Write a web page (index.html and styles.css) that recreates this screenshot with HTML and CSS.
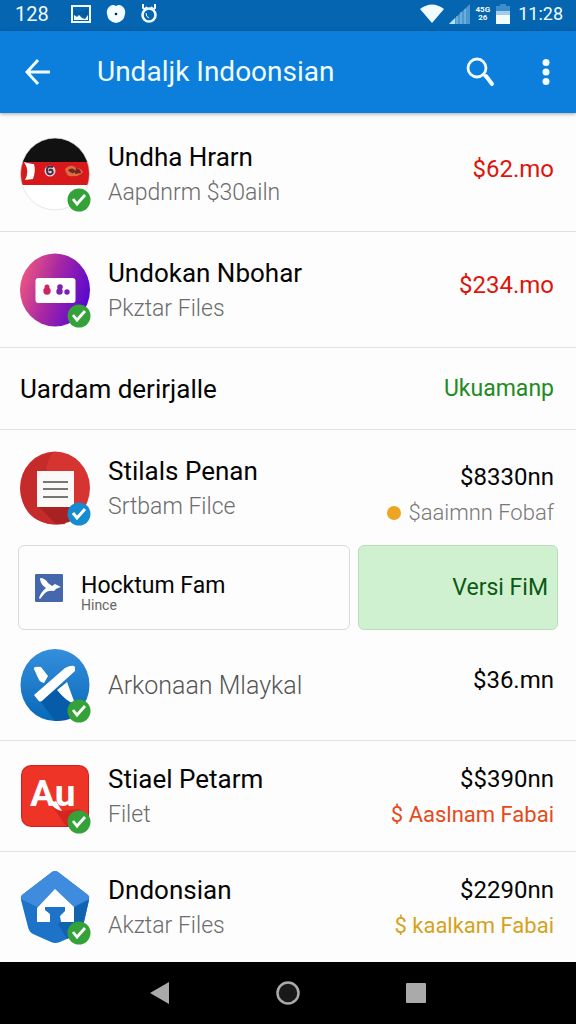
FILE: index.html
```html
<!DOCTYPE html>
<html lang="id">

<head>
    <meta charset="utf-8">
    <meta name="viewport" content="width=device-width, initial-scale=1">
    <title>Undaljk Indoonsian</title>
    <link rel="stylesheet" href="styles.css">
</head>

<body>
    <div class="status-bar">
        <span class="status-text">128</span>
        <svg class="status-image" width="20" height="18" viewBox="0 0 20 18">
            <rect x="1" y="1" width="18" height="16" fill="none" stroke="#f0fcff" stroke-width="2" />
            <path d="M3 4l5 3 4-1 5-2v5l-3 4-3-4-3 2-2-2-3 2z" fill="#07599b" />
            <path d="M3 10l3 2 2-2 3 3 3 1 3-4v5H3z" fill="#f0fcff" />
        </svg>
        <svg class="status-blob" width="20" height="20" viewBox="0 0 20 20">
            <path d="M4 2q3-2 6 0 3-2 6 0 4 3 3 8-1 8-9 9-8-1-9-9-1-5 3-8z" fill="#f0fcff" />
            <circle cx="10" cy="10" r="1.3" fill="#123" />
        </svg>
        <svg class="status-ring" width="18" height="20" viewBox="0 0 18 20" fill="none" stroke="#f0fcff">
            <circle cx="9" cy="11" r="6.5" stroke-width="2.6" />
            <path d="M3 0v4l3 2M15 0v4l-3 2M7 3l-3 3M11 3l3 3" stroke-width="2" />
            <path d="M6 9q0 4 3 5" stroke-width="1" />
        </svg>
        <div class="status-right">
            <svg width="24" height="20" viewBox="0 0 24 20">
                <path d="M0 5Q12-4 24 5L12 19z" fill="#f0fcff" />
            </svg>
            <svg width="21" height="20" viewBox="0 0 21 20">
                <path d="M0 20L21 0v20z" fill="#4b97d0" />
                <path d="M0 20l6-6v6z" fill="#b9e0f5" />
                <path d="M8 12v8M12 8v12M16 5v15" stroke="#8fc3e8" stroke-width="1" />
            </svg>
            <span class="status-net"><span>45G</span><span>26</span></span>
            <svg width="14" height="20" viewBox="0 0 14 20">
                <path d="M4 0h6v2h4v9H0V2h4z" fill="#3c8ecb" />
                <rect y="7" width="14" height="5" fill="#a5cbea" />
                <rect y="11" width="14" height="9" fill="#f0fcff" />
            </svg>
            <span class="status-text clock">11:28</span>
        </div>
    </div>

    <header class="app-bar">
        <button class="icon-button" aria-label="Back">
            <svg width="26" height="26" viewBox="0 0 26 26">
                <path d="M13 1L2 13l11 12M2 13h23" fill="none" stroke="#f0fcff" stroke-width="3" />
            </svg>
        </button>
        <h1 class="app-title">Undaljk Indoonsian</h1>
        <button class="icon-button" aria-label="Search">
            <svg width="30" height="30" viewBox="0 0 30 30" fill="none" stroke="#f0fcff">
                <circle cx="11" cy="11" r="9" stroke-width="2.8" />
                <path d="M17 17l4 4" stroke-width="3" />
                <path d="M20 19l6 8" stroke-width="4" stroke-linecap="round" />
            </svg>
        </button>
        <button class="icon-button menu-button" aria-label="More">
            <svg width="8" height="26" viewBox="0 0 8 26" fill="#f0fcff">
                <circle cx="4" cy="3.5" r="3.5" />
                <circle cx="4" cy="13" r="3.5" />
                <circle cx="4" cy="22.5" r="3.5" />
            </svg>
        </button>
    </header>

    <main class="list">
        <div class="row">
            <div class="avatar">
                <svg width="70" height="74" viewBox="0 0 70 74">
                    <clipPath id="flag"><ellipse cx="35" cy="37" rx="34.5" ry="36" /></clipPath>
                    <g clip-path="url(#flag)">
                        <rect width="70" height="74" fill="#fff" />
                        <rect width="70" height="26" fill="#111" />
                        <rect y="25" width="70" height="23" fill="#d8191c" />
                        <path d="M4 25q7 2 10 2 2 7-1 15l-8 1q5-9-1-18z" fill="#fff" />
                        <circle cx="30" cy="34" r="5.5" fill="#e9cfd7" />
                        <path d="M33 30q-6-2-6 3 0 5 4 4 3-1 1-4-2-1-3 1" fill="none" stroke="#423047" stroke-width="2" />
                        <path d="M45 32q6-6 11-1 5 0 7 4-4 5-10 4-6 2-8-7z" fill="#dc6c42" />
                        <path d="M48 33q5-4 8 2-5 3-8-2m8-2q5 1 5 5l-6 1" fill="#722621" />
                    </g>
                    <ellipse cx="35" cy="37" rx="34.5" ry="36" fill="none" stroke="#ddd" stroke-width=".7" />
                </svg>
                <svg class="badge" width="24" height="24" viewBox="0 0 24 24">
                    <circle cx="12" cy="12" r="11.5" fill="#35a239" />
                    <path d="M6 11l4 5 8-9" fill="none" stroke="#fff" stroke-width="2.8" />
                </svg>
            </div>
            <div class="info">
                <div class="name">Undha Hrarn</div>
                <div class="sub">Aapdnrm $30ailn</div>
            </div>
            <div class="amount single red">$62.mo</div>
        </div>

        <div class="row">
            <div class="avatar">
                <svg width="70" height="74" viewBox="0 0 70 74">
                    <linearGradient id="purple" x1="0" y1=".2" x2="1" y2=".55">
                        <stop offset="0" stop-color="#f35b7c" />
                        <stop offset=".5" stop-color="#a526a5" />
                        <stop offset="1" stop-color="#5908cf" />
                    </linearGradient>
                    <ellipse cx="35" cy="37" rx="35" ry="36.5" fill="url(#purple)" />
                    <rect x="15.5" y="25" width="40" height="25" rx="3" fill="#fff" />
                    <g fill="#ce2464">
                        <circle cx="27" cy="34" r="2.5" />
                        <circle cx="27" cy="38" r="3.7" />
                    </g>
                    <g fill="#7c23ae">
                        <circle cx="40" cy="34" r="2.8" />
                        <circle cx="39.5" cy="38.5" r="3.2" />
                        <circle cx="47" cy="39" r="2.7" />
                    </g>
                </svg>
                <svg class="badge" width="24" height="24" viewBox="0 0 24 24">
                    <circle cx="12" cy="12" r="11.5" fill="#35a239" />
                    <path d="M6 11l4 5 8-9" fill="none" stroke="#fff" stroke-width="2.8" />
                </svg>
            </div>
            <div class="info">
                <div class="name">Undokan Nbohar</div>
                <div class="sub">Pkztar Files</div>
            </div>
            <div class="amount single red">$234.mo</div>
        </div>

        <div class="section">
            <h2 class="section-title">Uardam derirjalle</h2>
            <a class="section-link" href="#">Ukuamanp</a>
        </div>

        <div class="row plain">
            <div class="avatar">
                <svg width="70" height="74" viewBox="0 0 70 74">
                    <ellipse cx="35" cy="37" rx="35" ry="36.5" fill="#d63431" />
                    <path d="M34 1Q26 8 26 24L18 54l28 19Q7 77 1 44-3 8 34 1z" fill="#c62b2b" />
                    <path d="M18 55l36 1 8 8-13 7q-6 2-13 2z" fill="#a82223" />
                    <rect x="17" y="20" width="37" height="36" fill="#fbf8f8" />
                    <path d="M23 31h25M23 38h25M23 46h25" stroke="#777" stroke-width="2" />
                </svg>
                <svg class="badge" width="24" height="24" viewBox="0 0 24 24">
                    <circle cx="12" cy="12" r="11.5" fill="#168bcf" />
                    <path d="M6 11l4 5 8-9" fill="none" stroke="#fff" stroke-width="3" />
                </svg>
            </div>
            <div class="info">
                <div class="name">Stilals Penan</div>
                <div class="sub">Srtbam Filce</div>
            </div>
            <div class="amount low">
                <div>$8330nn</div>
                <div class="note"><span class="dot"></span>$aaimnn Fobaf</div>
            </div>
        </div>

        <div class="cards">
            <button class="card">
                <svg width="30" height="30" viewBox="0 0 30 30">
                    <rect x="1" y="1" width="28" height="28" rx="1" fill="#4568ad" />
                    <path d="M6 5q5 0 8 5l4 3 3-2 6 3q-5 1-7 4-6-1-9 2l-5 6-1-1q2-6 7-10-6-4-6-10z" fill="#fff" />
                </svg>
                <span class="card-text">
                    <span class="card-title">Hocktum Fam</span>
                    <span class="card-sub">Hince</span>
                </span>
            </button>
            <button class="card card-green">Versi FiM</button>
        </div>

        <div class="row compact">
            <div class="avatar">
                <svg width="70" height="74" viewBox="0 0 70 74">
                    <linearGradient id="blue" x1="0" y1="0" x2="0" y2="1">
                        <stop offset="0" stop-color="#348fdc" />
                        <stop offset="1" stop-color="#0869b9" />
                    </linearGradient>
                    <ellipse cx="35" cy="37" rx="34.5" ry="36" fill="url(#blue)" />
                    <path d="M20 53l26-19 8 21 10 5q-11 14-29 13z" fill="#075ca9" />
                    <path d="M14 21q-1-3 7-2l7 9-4 7q-3 0-5-3zM37 42l10-8 7 19-1 2q-6-1-16-13z" fill="#fff" />
                    <path d="M14 47L45 20q8-4 10-1v4L23 52q-3 3-5 0z" fill="#fff" />
                </svg>
                <svg class="badge" width="24" height="24" viewBox="0 0 24 24">
                    <circle cx="12" cy="12" r="11.5" fill="#35a239" />
                    <path d="M6 11l4 5 8-9" fill="none" stroke="#fff" stroke-width="2.8" />
                </svg>
            </div>
            <div class="info">
                <div class="name muted">Arkonaan Mlaykal</div>
            </div>
            <div class="amount single">$36.mn</div>
        </div>

        <div class="row compact">
            <div class="avatar">
                <svg width="70" height="74" viewBox="0 0 70 74">
                    <rect x="1" y="6" width="68" height="62" rx="10" fill="#c9221e" />
                    <rect x="2" y="7" width="66" height="60" rx="9" fill="#ee3427" />
                    <path d="M37 45l5 7 17-2 9 8v9H46L32 47z" fill="#d4251e" />
                    <path d="M29 42q4 1 7 0l6 10q-8-1-13-10z" fill="#fff" />
                    <text class="logo-text" x="10" y="47">Au</text>
                </svg>
                <svg class="badge" width="24" height="24" viewBox="0 0 24 24">
                    <circle cx="12" cy="12" r="11.5" fill="#35a239" />
                    <path d="M6 11l4 5 8-9" fill="none" stroke="#fff" stroke-width="2.8" />
                </svg>
            </div>
            <div class="info">
                <div class="name">Stiael Petarm</div>
                <div class="sub">Filet</div>
            </div>
            <div class="amount">
                <div>$$390nn</div>
                <div class="note orange">$ Aaslnam Fabai</div>
            </div>
        </div>

        <div class="row compact last">
            <div class="avatar">
                <svg width="70" height="74" viewBox="0 0 70 74">
                    <path d="M32 2q3-2 6 0l30 23q2 2 1 5l-6 27q-1 5-5 7l-18 8q-5 2-9 0l-18-8q-4-2-5-7L1 30q-1-3 1-5z" fill="#1c73c8" />
                    <path d="M32 2q3-2 6 0l30 23q2 2 1 4L53 37 35 20 17 37 1 29q-1-2 1-4z" fill="#3f8bde" />
                    <path d="M38 54l16-16 15-8-7 29q-1 4-5 5l-10 5z" fill="#1263af" />
                    <path d="M35 19l19 18v15H41l-1-6 5-5v-4H25v3l5 4v8H17V38z" fill="#fff" />
                </svg>
                <svg class="badge" width="24" height="24" viewBox="0 0 24 24">
                    <circle cx="12" cy="12" r="11.5" fill="#35a239" />
                    <path d="M6 11l4 5 8-9" fill="none" stroke="#fff" stroke-width="2.8" />
                </svg>
            </div>
            <div class="info">
                <div class="name">Dndonsian</div>
                <div class="sub">Akztar Files</div>
            </div>
            <div class="amount">
                <div>$2290nn</div>
                <div class="note gold">$ kaalkam Fabai</div>
            </div>
        </div>
    </main>

    <nav class="nav-bar">
        <button class="icon-button" aria-label="Back">
            <svg width="20" height="22" viewBox="0 0 20 22">
                <path d="M0 11L19 0v22z" fill="#aaa" />
            </svg>
        </button>
        <button class="icon-button" aria-label="Home">
            <svg width="24" height="24" viewBox="0 0 24 24">
                <circle cx="12" cy="12" r="10.5" fill="#191919" stroke="#aaa" stroke-width="2.5" />
            </svg>
        </button>
        <button class="icon-button" aria-label="Recent apps">
            <svg width="20" height="20" viewBox="0 0 20 20">
                <rect width="20" height="20" rx="1" fill="#aaa" />
            </svg>
        </button>
    </nav>
</body>

</html>
```
FILE: styles.css
```css
* {
    box-sizing: border-box;
}

body {
    display: flex;
    flex-direction: column;
    min-height: 100vh;
    margin: 0;
    background-color: #fdfdfd;
    color: #050505;
    font-family: Roboto, "Liberation Sans", sans-serif;
}

svg {
    display: block;
    flex: none;
}

button {
    font-family: inherit;
    cursor: pointer;
}

/* status bar */
.status-bar {
    display: flex;
    align-items: center;
    height: 31px;
    padding: 0 13px 4px 15px;
    background-color: #0565b1;
    color: #f0fcff;
}

.status-text {
    font-size: 20px;
    line-height: 24px;
}

.clock {
    margin-left: 3px;
    font-size: 18px;
}

.status-image {
    margin-left: 22px;
}

.status-blob {
    margin-left: 15px;
}

.status-ring {
    margin-left: 14px;
}

.status-right {
    display: flex;
    align-items: center;
    gap: 5px;
    margin-left: auto;
}

.status-net {
    display: flex;
    flex-direction: column;
    align-items: center;
    margin: 0 1px;
    font-size: 8px;
    font-weight: bold;
    line-height: 8px;
}

/* app bar */
.app-bar {
    display: flex;
    align-items: center;
    height: 82px;
    padding: 0 23px 0 22px;
    background-color: #0c7fdc;
    box-shadow: 0 1px 4px rgba(0, 0, 0, 0.35);
    color: #f0fcff;
}

.icon-button {
    display: flex;
    align-items: center;
    justify-content: center;
    padding: 3px;
    border: 0;
    background: none;
}

.app-title {
    flex: 1;
    margin: 0;
    padding-left: 43px;
    font-size: 28px;
    font-weight: 400;
    line-height: 36px;
}

.menu-button {
    margin-left: 40px;
}

/* list */
.list {
    display: flex;
    flex: 1;
    flex-direction: column;
    padding-top: 3px;
}

.row {
    display: flex;
    align-items: center;
    min-height: 116px;
    padding: 0 22px 0 20px;
    border-bottom: 1px solid #e0e3e4;
}

.plain {
    min-height: 115px;
    border-bottom: 0;
}

.compact {
    min-height: 111px;
}

.last {
    min-height: 110px;
    border-bottom: 0;
}

.avatar {
    position: relative;
    flex: none;
    margin-right: 18px;
}

.badge {
    position: absolute;
    right: -1px;
    bottom: -1px;
}

.logo-text {
    fill: #fff;
    font-size: 37px;
    font-weight: 700;
}

.info {
    flex: 1;
    padding-top: 2px;
}

.name {
    font-size: 26px;
    line-height: 36px;
}

.sub {
    color: #6c6c6c;
    font-size: 23px;
    font-weight: 300;
    line-height: 36px;
}

.muted {
    color: #555;
    font-size: 25px;
    font-weight: 300;
}

.amount {
    padding-top: 2px;
    font-size: 24px;
    line-height: 36px;
    text-align: right;
    white-space: nowrap;
}

.single {
    padding: 0 0 10px;
}

.low {
    padding-top: 14px;
}

.note {
    font-size: 22px;
}

.low .note {
    display: flex;
    align-items: center;
    color: #777;
    font-weight: 300;
}

.dot {
    width: 14px;
    height: 14px;
    margin-right: 7px;
    border-radius: 50%;
    background-color: #eda522;
}

.red {
    color: #de150c;
}

.orange {
    color: #e64a19;
}

.gold {
    color: #d6a21b;
}

/* section heading */
.section {
    display: flex;
    align-items: center;
    justify-content: space-between;
    min-height: 82px;
    padding: 0 22px 0 20px;
    border-bottom: 1px solid #e0e3e4;
}

.section-title {
    margin: 0;
    font-size: 26px;
    font-weight: 400;
}

.section-link {
    color: #228b22;
    font-size: 23px;
    text-decoration: none;
}

/* cards */
.cards {
    display: flex;
    gap: 8px;
    min-height: 85px;
    padding: 0 18px;
}

.card {
    display: flex;
    flex: 5;
    align-items: center;
    padding: 0 15px;
    border: 1px solid #d9dbdd;
    border-radius: 6px;
    background-color: #fdfdfd;
    color: #050505;
    text-align: left;
}

.card-text {
    display: flex;
    flex-direction: column;
    padding: 8px 0 0 17px;
}

.card-title {
    font-size: 23px;
    line-height: 26px;
}

.card-sub {
    color: #666;
    font-size: 14px;
    line-height: 12px;
}

.card-green {
    flex: 3;
    justify-content: flex-end;
    padding: 0 9px;
    border-color: #bcdcc0;
    background-color: #d0f1d0;
    color: #0b5a14;
    font-size: 23px;
}

/* system navigation */
.nav-bar {
    display: flex;
    align-items: center;
    justify-content: center;
    gap: 100px;
    height: 62px;
    background-color: #000;
}
```
